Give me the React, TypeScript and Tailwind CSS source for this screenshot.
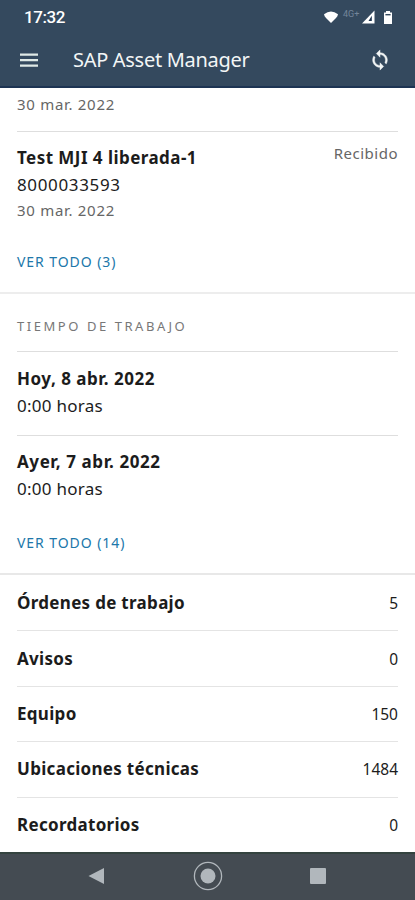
import type { ReactNode } from 'react';

function Line({ children, className }: { children: ReactNode; className: string }) {
  return <div className={`flex items-center whitespace-nowrap ${className}`}>{children}</div>;
}

function StatusBar() {
  return (
    <div className="flex h-[34px] items-center justify-between pl-6 pr-[22px] text-white">
      <span className="font-['Roboto'] text-[17px] font-medium leading-5 tracking-[-0.45px]">17:32</span>
      <div className="flex h-4 items-center">
        <svg width="16" height="14" viewBox="0 0 16 14" fill="currentColor">
          <path d="M1 4.2Q8-1.4 15 4.2Q14.7 6.2 13 8L8 13L3 8Q1.3 6.2 1 4.2Z" />
        </svg>
        <span className="ml-[4px] -mt-[7px] w-[18px] whitespace-nowrap font-['Roboto'] text-[9px] leading-3 text-[#73859a]">4G+</span>
        <svg width="14" height="14" viewBox="0 0 14 14" className="ml-[1px]">
          <path d="M0 13.5L12.5 .5V13.5Z" fill="currentColor" />
          <path d="M6.5 11L9.8 5.8V11Z" fill="#1f3550" />
        </svg>
        <svg width="10" height="15" viewBox="0 0 10 15" className="ml-[7px]">
          <path d="M3 1H7V2.5H9V14H1V2.5H3Z" fill="currentColor" />
          <path d="M2.4 4H7.6V5.4H2.4Z" fill="#34495e" />
        </svg>
      </div>
    </div>
  );
}

function AppBar() {
  return (
    <div className="flex h-[54px] items-center border-b-2 border-[#1d3453] pl-5 pr-[24px] text-[#f3f6f6]">
      <svg width="18" height="14" viewBox="0 0 18 14" fill="#dfe9e6">
        <path d="M0 .5H18V2.8H0ZM0 6H18V8.3H0ZM0 11.5H18V13.8H0Z" />
      </svg>
      <h1 className="ml-[35px] grow text-[20px] leading-6 tracking-[-0.3px]">SAP Asset Manager</h1>
      <svg width="22" height="22" viewBox="0 0 24 24" fill="currentColor" stroke="currentColor" strokeWidth=".5">
        <path d="M12 4V1L8 5l4 4V6c3.31 0 6 2.69 6 6 0 1.01-.25 1.97-.7 2.8l1.46 1.46C19.54 15.03 20 13.57 20 12c0-4.42-3.58-8-8-8zm0 14c-3.31 0-6-2.69-6-6 0-1.01.25-1.97.7-2.8L5.24 7.74C4.46 8.97 4 10.43 4 12c0 4.42 3.58 8 8 8v3l4-4-4-4v3z" />
      </svg>
    </div>
  );
}

const counters = [
  { label: 'Órdenes de trabajo', count: '5', row: 'h-[56px] border-b' },
  { label: 'Avisos', count: '0', row: 'h-[56px] border-b' },
  { label: 'Equipo', count: '150', row: 'h-[55px] border-b pb-px' },
  { label: 'Ubicaciones técnicas', count: '1484', row: 'h-[56px] border-b pb-px' },
  { label: 'Recordatorios', count: '0', row: 'h-[54px] pb-px' },
];

function NavBar() {
  return (
    <div className="flex h-[48px] items-center border-t-2 border-[#34433f] bg-[#444b52] pb-0.5 text-[#b1b7bc]">
      <svg className="ml-[88px]" width="16" height="18" viewBox="0 0 16 18" fill="currentColor">
        <path d="M.5 9L16 1V17Z" />
      </svg>
      <svg className="ml-[89px]" width="30" height="30" viewBox="0 0 30 30">
        <circle cx="15" cy="15" r="13.6" fill="none" stroke="currentColor" strokeWidth="1.3" />
        <circle cx="15" cy="15" r="7.5" fill="currentColor" />
      </svg>
      <div className="ml-[87px] h-4 w-4 rounded-[1px] bg-[#b1b7bc]" />
    </div>
  );
}

export default function App() {
  return (
    <div className="flex h-[900px] w-[415px] flex-col overflow-hidden bg-white font-['Noto_Sans',sans-serif] text-[#1c1c1c]">
      <header className="bg-[#34495e]">
        <StatusBar />
        <AppBar />
      </header>
      <main className="flex flex-col">
        <section className="h-[206px] border-b-2 border-[#ededed] px-[17px]">
          <div className="h-[44px] border-b border-[#dedede] pt-[5px]">
            <Line className="h-[22px] text-[15px] tracking-[0.7px] text-[#666]">30 mar. 2022</Line>
          </div>
          <div className="flex justify-between pt-[11px]">
            <div>
              <Line className="h-[28px] pt-0.5 text-[17px] font-bold tracking-[0.45px]">Test MJI 4 liberada-1</Line>
              <Line className="h-[27px] text-[17px] tracking-[0.65px]">8000033593</Line>
              <Line className="h-[25px] text-[15px] tracking-[0.7px] text-[#666]">30 mar. 2022</Line>
            </div>
            <Line className="h-[20px] text-[15px] tracking-[0.5px] text-[#666]">Recibido</Line>
          </div>
          <Line className="mt-[26px] h-[24px] text-[14px] tracking-[0.93px] text-[#2077aa]">VER TODO (3)</Line>
        </section>
        <section className="h-[281px] border-b-2 border-[#e8e8e8] px-[17px]">
          <div className="h-[58px] border-b border-[#dedede] pt-[23px]">
            <Line className="h-[20px] text-[13px] tracking-[2.55px] text-[#777]">TIEMPO DE TRABAJO</Line>
          </div>
          <div className="h-[84px] border-b border-[#dedede] pt-[12px]">
            <Line className="h-[28px] pt-0.5 text-[17px] font-bold tracking-[0.52px]">Hoy, 8 abr. 2022</Line>
            <Line className="h-[27px] text-[17px] tracking-[0.27px]">0:00 horas</Line>
          </div>
          <div className="pt-[11px]">
            <Line className="h-[28px] pt-0.5 text-[17px] font-bold tracking-[0.58px]">Ayer, 7 abr. 2022</Line>
            <Line className="h-[27px] text-[17px] tracking-[0.27px]">0:00 horas</Line>
          </div>
          <Line className="mt-[28px] h-[24px] text-[14px] tracking-[0.93px] text-[#2077aa]">VER TODO (14)</Line>
        </section>
        <section className="px-[17px]">
          {counters.map(({ label, count, row }) => (
            <div key={label} className={`flex items-center justify-between border-[#e4e4e4] ${row}`}>
              <span className="text-[17px] font-bold leading-6 tracking-[0.3px]">{label}</span>
              <span className="text-[15.5px] leading-6">{count}</span>
            </div>
          ))}
        </section>
      </main>
      <NavBar />
    </div>
  );
}
